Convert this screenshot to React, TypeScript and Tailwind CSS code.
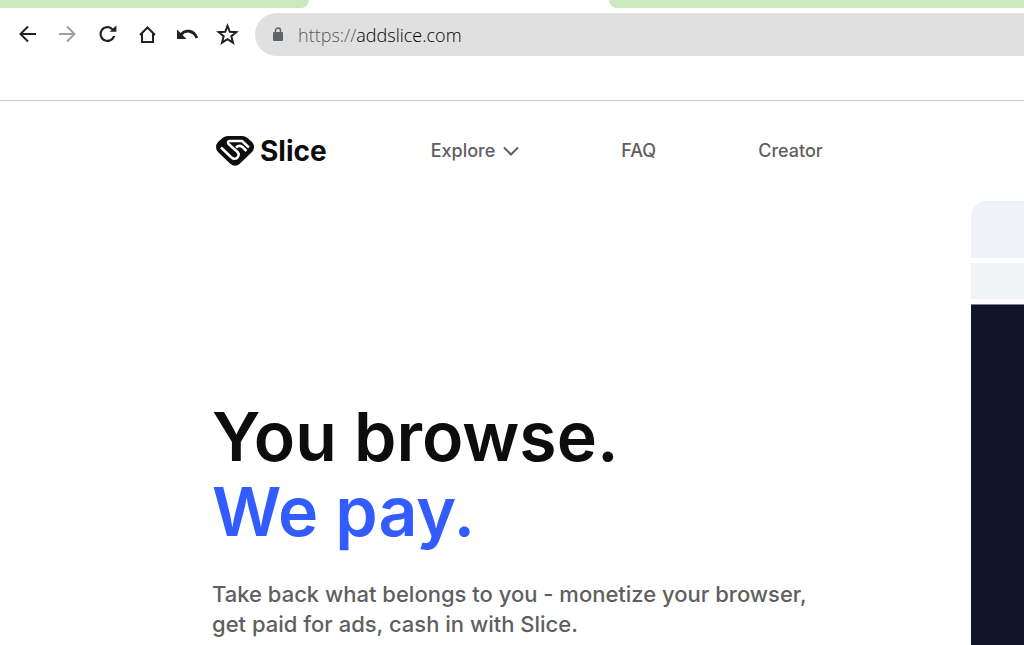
import type { ReactNode } from "react";

type IconButtonProps = { label: string; disabled?: boolean; children: ReactNode };

function IconButton({ label, disabled, children }: IconButtonProps) {
  return (
    <button
      type="button"
      aria-label={label}
      disabled={disabled}
      className="flex size-10 items-center justify-center text-[#202124] disabled:text-[#a0a0a0]"
    >
      <svg viewBox="0 0 24 24" className="size-6" fill="none" stroke="currentColor" strokeWidth="2">
        {children}
      </svg>
    </button>
  );
}

function Toolbar() {
  return (
    <div className="flex items-center pt-[5px]">
      <div className="flex shrink-0 pr-2 pl-[7px]">
        <IconButton label="Back">
          <path d="M21 11H6M13 3.500l-7.500 7.500 7.500 7.500" />
        </IconButton>
        <IconButton label="Forward" disabled>
          <path d="M4 11h15M12 3.500l7.500 7.500-7.500 7.500" />
        </IconButton>
        <IconButton label="Reload">
          <path
            d="M18 5.500C16.700 4 14.800 3 12.500 3c-4.400 0-8 3.580-8 8s3.580 8 8 8c3.700 0 6.800-2.500 7.700-6h-2.300c-.8 2.200-2.900 3.800-5.400 3.800-3.200 0-5.800-2.600-5.800-5.800s2.600-5.800 5.800-5.800c1.600 0 3 .65 4.100 1.700L14.700 8.800h6.700V2.500z"
            fill="currentColor"
            stroke="none"
          />
        </IconButton>
        <IconButton label="Home">
          <path d="M5 12 12.500 4.500l7.500 7.500M7 10.500v8.500h11v-8.500" />
        </IconButton>
        <IconButton label="Undo">
          <path d="M2 6.500v9.500h9.500z" fill="currentColor" stroke="none" />
          <path d="M5.500 12c5-6 13-5 16.500 3" strokeWidth="2.800" />
        </IconButton>
        <IconButton label="Bookmark">
          <path d="M12.500 2.800 14.800 8.800 21.300 9.200 16.300 13.200 18 19.700 12.500 16.200 7 19.700 8.700 13.200 3.700 9.200 10.200 8.800z" />
        </IconButton>
      </div>
      <label className="flex h-[43px] min-w-0 flex-1 items-center rounded-l-full bg-[#e0e0e0] pl-[17px] font-['Open_Sans',sans-serif] text-lg font-light">
        <svg viewBox="0 0 12 16" className="mr-[14px] h-4 w-3 shrink-0 text-[#5f6368]">
          <rect x="1" y="5" width="10" height="9" rx="1" fill="currentColor" />
          <path d="M3.500 5V3.500a2.500 2.500 0 0 1 5 0V5" fill="none" stroke="currentColor" strokeWidth="1.500" />
        </svg>
        <span className="text-[#55585c]">https://</span>
        <input
          type="text"
          aria-label="Address"
          defaultValue="addslice.com"
          className="min-w-0 flex-1 bg-transparent text-black outline-none"
        />
      </label>
    </div>
  );
}

function Logo() {
  return (
    <a href="#home" className="flex items-center gap-[6px] text-[#0d0d0d]">
      <svg viewBox="0 0 38 30" className="h-[30px] w-[38px]" aria-hidden="true">
        <path
          d="M12 0H26Q29 0 31.500 2L36 6Q40 11 36 16L24 27.500Q19 32 14 27.500L2 16Q-2 11 2 6L6.500 2Q9 0 12 0Z"
          fill="currentColor"
        />
        <path
          d="M5 11.500 15.500 21.500Q18.500 24 21.500 21.500 24 18.500 21.500 16L12.500 8Q11 5 14 5H26L33 11.500M30.500 15 26.500 11Q23 8.500 20 11.500"
          fill="none"
          stroke="#fff"
          strokeWidth="2.500"
        />
      </svg>
      <span className="text-[28px] leading-8 font-bold">Slice</span>
    </a>
  );
}

function SiteHeader() {
  return (
    <header className="flex h-[100px] items-center pl-[216px]">
      <Logo />
      <nav className="ml-[104px] flex items-center gap-[102px] text-lg font-medium text-[#5f5f5f]">
        <button type="button" className="flex items-center gap-2">
          Explore
          <svg viewBox="0 0 16 10" className="h-[10px] w-4" fill="none" stroke="currentColor" strokeWidth="2">
            <path d="m1 1.500 7 7 7-7" />
          </svg>
        </button>
        <a href="#faq">FAQ</a>
        <a href="#creator">Creator</a>
      </nav>
    </header>
  );
}

function Hero() {
  return (
    <main className="flex flex-1 items-stretch pl-[212px]">
      <section className="min-w-0 flex-1 pt-[198px]">
        <h1 className="text-[68px] leading-[75px] font-semibold text-[#0d0d0d]">
          You browse.
          <span className="block text-[#335cff]">We pay.</span>
        </h1>
        <p className="mt-[30px] text-[22px] leading-[30px] font-medium text-[#5f5f5f]">
          Take back what belongs to you - monetize your browser,
          <br />
          get paid for ads, cash in with Slice.
        </p>
      </section>
      <aside aria-label="Browser preview" className="flex w-[53px] shrink-0 flex-col">
        <div className="h-[57px] rounded-tl-2xl bg-[#eff3f9]" />
        <div className="mt-[5px] h-9 bg-[#f1f4f5]" />
        <div className="mt-[5px] flex-1 border-t border-[#80828a] bg-[#101527]" />
      </aside>
    </main>
  );
}

export default function App() {
  return (
    <div className="flex min-h-screen flex-col overflow-hidden bg-white font-['Inter',sans-serif]">
      <div className="border-b border-[#c8c8c8] pb-11">
        <div className="flex justify-between">
          <div className="h-2 w-[309px] rounded-br-lg bg-[#cbe9bf]" />
          <div className="h-2 w-[415px] rounded-bl-lg bg-[#cbe9bf]" />
        </div>
        <Toolbar />
      </div>
      <SiteHeader />
      <Hero />
    </div>
  );
}
